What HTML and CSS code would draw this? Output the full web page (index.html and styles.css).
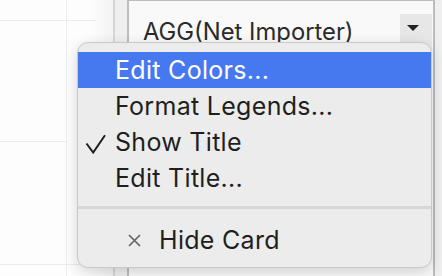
FILE: index.html
```html
<!DOCTYPE html>
<html lang="en">
<head>
  <meta charset="UTF-8">
  <meta name="viewport" content="width=device-width, initial-scale=1.0">
  <title>Legend Card Menu</title>
  <link rel="stylesheet" href="styles.css">
</head>
<body>
  <div class="app">
    <div class="canvas"></div>

    <aside class="sidebar">
      <div class="card">
        <div class="legend-select">
          <span class="legend-name">AGG(Net Importer)</span>
          <span class="select-arrow"></span>
        </div>
      </div>
    </aside>

    <div class="context-menu">
      <div class="menu-item active"><span></span><span class="menu-label">Edit Colors...</span></div>
      <div class="menu-item"><span></span><span class="menu-label">Format Legends...</span></div>
      <div class="menu-item">
        <svg class="menu-check" width="21" height="20" viewBox="0 0 21 20">
          <path d="M1.5 9.5 L8.2 18.5 L20 1.2" fill="none" stroke="#1f1f1f" stroke-width="2"/>
        </svg>
        <span class="menu-label">Show Title</span>
      </div>
      <div class="menu-item"><span></span><span class="menu-label">Edit Title...</span></div>
      <div class="menu-sep"></div>
      <div class="menu-item hide">
        <svg width="13" height="13" viewBox="0 0 13 13">
          <path d="M1 1 L12 12 M12 1 L1 12" stroke="#666" stroke-width="1.7"/>
        </svg>
        <span class="menu-label">Hide Card</span>
      </div>
    </div>
  </div>
</body>
</html>
```

FILE: styles.css
```css
* { box-sizing: border-box; margin: 0; padding: 0; }
body { font-family: Inter, "Liberation Sans", sans-serif; background: #fcfcfc; color: #222; }
.app { position: relative; display: flex; height: 276px; overflow: hidden; }

/* worksheet canvas with faint grid */
.canvas {
  flex: none; width: 113px;
  background:
    linear-gradient(#ececec, #ececec) 66px 0 / 1px 100% no-repeat,
    linear-gradient(#ececec, #ececec) 0 20px / 96px 1px no-repeat,
    linear-gradient(#ececec, #ececec) 0 141px / 66px 1px no-repeat,
    linear-gradient(#ececec, #ececec) 0 264px / 80px 1px no-repeat,
    linear-gradient(to right, #fdfdfd 80%, #f3f3f3);
}

/* legend panel */
.sidebar { flex: 1; border-left: 2px solid #d6d6d6; background: #efefef; padding: 0 7px 0 12px; }
.card { height: calc(100% + 1px); margin-top: -1px; border: 2px solid #bcbcbc; border-bottom: none; background: #f9f9f9; }
.legend-select { display: flex; height: 36px; margin: 13px 1px 0 0; padding-left: 14px; }
.legend-name { flex: 1; font-size: 23.8px; line-height: 36px; color: #2b2b2b; white-space: nowrap; }
.select-arrow { display: flex; justify-content: center; align-items: center; width: 32px; padding: 0 6px 8px 0; background: #e7e7e7; }
.select-arrow::after { content: ""; border-left: 6px solid transparent; border-right: 6px solid transparent; border-top: 6px solid #222; }

/* context menu */
.context-menu {
  position: absolute; left: 77px; top: 42px; width: 355px;
  padding: 9px 0; background: #ececec;
  border: 1px solid #c8c8c8; border-radius: 11px;
  box-shadow: 0 4px 14px rgba(0,0,0,0.16);
}
.menu-item { display: grid; grid-template-columns: 37px auto; align-items: center; height: 36px; font-size: 25px; letter-spacing: 0.3px; color: #1f1f1f; }
.menu-label { padding-top: 1px; line-height: 35px; white-space: nowrap; }
.menu-item.active { background: #4679ef; color: #fff; }
.menu-check { margin: 4px 0 0 7px; }
.menu-sep { height: 3px; margin: 10px 0 13px; background: #d6d6d6; }
.menu-item.hide { grid-template-columns: 13px auto; column-gap: 18px; padding-left: 50px; }
```
